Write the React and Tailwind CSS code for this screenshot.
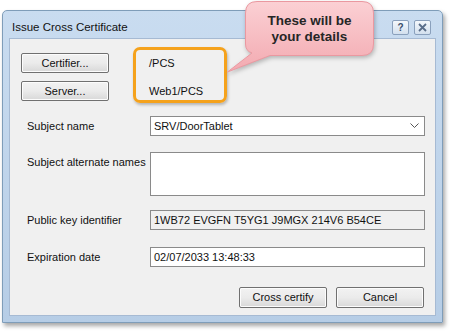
import React from "react";

function WinButton({ children, className = "" }) {
  return (
    <div
      className={
        "flex items-center justify-center border border-[#707070] rounded-[2px] bg-gradient-to-b from-[#f2f2f2] via-[#ebebeb] to-[#d8d8d8] shadow-[inset_0_0_0_1px_#fcfcfc] text-[11px] text-[#111] " +
        className
      }
    >
      {children}
    </div>
  );
}

function Field({ children, className = "", gray = false }) {
  return (
    <div
      className={
        "flex items-center border border-[#8a8a8a] px-[3px] text-[11px] text-[#111] " +
        (gray ? "bg-[#f0f0f0] " : "bg-white ") +
        className
      }
    >
      {children}
    </div>
  );
}

export default function App() {
  return (
    <div
      className="relative w-[454px] h-[334px] bg-white overflow-hidden"
      style={{ fontFamily: '"Liberation Sans", Arial, sans-serif' }}
    >
      <div className="pt-[10px] pl-[2px]">
        {/* Window */}
        <div className="w-[441px] h-[313px] flex flex-col border border-[#7f9db9] rounded-t-[5px] bg-gradient-to-b from-[#c9dcf0] to-[#b6cde6] shadow-[2px_3px_4px_rgba(0,0,0,0.35)]">
          {/* Title bar */}
          <div className="h-[27px] flex items-start justify-between pl-[9px] pr-[11px]">
            <div className="pt-[9px] text-[11.5px] leading-[14px] text-[#111]">
              Issue Cross Certificate
            </div>
            <div className="flex gap-[5px] pt-[9px]">
              <div className="w-[17px] h-[15px] flex items-center justify-center border border-[#8aa0bc] rounded-[2px] bg-gradient-to-b from-[#f4f8fc] to-[#d3e0ee] text-[10px] font-bold text-[#3a4e6a] leading-none">
                ?
              </div>
              <div className="w-[17px] h-[15px] flex items-center justify-center border border-[#8aa0bc] rounded-[2px] bg-gradient-to-b from-[#f4f8fc] to-[#d3e0ee]">
                <svg width="9" height="9" viewBox="0 0 9 9">
                  <path d="M1 1 L8 8 M8 1 L1 8" stroke="#5a6e8a" strokeWidth="1.8" />
                </svg>
              </div>
            </div>
          </div>
          {/* Client area */}
          <div className="mx-[6px] mb-[6px] flex-1 bg-[#f0f0f0] border border-[#a6bad3] flex flex-col">
            <div className="pt-[14px] pl-[11px] flex flex-col gap-[8px]">
              <div className="flex items-center">
                <WinButton className="w-[88px] h-[20px]">Certifier...</WinButton>
                <div className="ml-[40px] text-[11px] text-[#111]">/PCS</div>
              </div>
              <div className="flex items-center">
                <WinButton className="w-[88px] h-[20px]">Server...</WinButton>
                <div className="ml-[40px] text-[11px] text-[#111]">Web1/PCS</div>
              </div>
            </div>

            <div className="mt-[15px] pl-[17px] pr-[10px] flex flex-col text-[11px] text-[#111]">
              <div className="flex items-center h-[20px]">
                <div className="w-[123px]">Subject name</div>
                <Field className="flex-1 h-[20px] justify-between">
                  <span>SRV/DoorTablet</span>
                  <svg width="9" height="6" viewBox="0 0 9 6" className="mr-[2px]">
                    <path d="M0.5 0.5 L4.5 4.5 L8.5 0.5" stroke="#555" strokeWidth="1" fill="none" />
                  </svg>
                </Field>
              </div>
              <div className="flex items-start mt-[16px]">
                <div className="w-[123px] pt-[2px]">Subject alternate names</div>
                <Field className="flex-1 h-[44px]" />
              </div>
              <div className="flex items-center mt-[14px]">
                <div className="w-[123px]">Public key identifier</div>
                <Field gray className="flex-1 h-[20px]">
                  1WB72 EVGFN T5YG1 J9MGX 214V6 B54CE
                </Field>
              </div>
              <div className="flex items-center mt-[17px]">
                <div className="w-[123px]">Expiration date</div>
                <Field className="flex-1 h-[20px]">02/07/2033 13:48:33</Field>
              </div>
            </div>

            <div className="mt-[20px] pr-[11px] flex justify-end gap-[9px]">
              <WinButton className="w-[88px] h-[21px]">Cross certify</WinButton>
              <WinButton className="w-[88px] h-[21px]">Cancel</WinButton>
            </div>
          </div>
        </div>
      </div>

      {/* Orange highlight box */}
      <div className="absolute left-[133px] top-[47px] w-[94px] h-[56px] border-[3px] border-[#f5a21c] rounded-[7px] shadow-[1px_2px_3px_rgba(0,0,0,0.25)]" />

      {/* Callout */}
      <svg
        className="absolute left-0 top-0 drop-shadow-[1px_2px_2px_rgba(0,0,0,0.25)]"
        width="454"
        height="80"
        viewBox="0 0 454 80"
      >
        <defs>
          <linearGradient id="pink" x1="0" y1="0" x2="0" y2="1">
            <stop offset="0" stopColor="#fbd0d4" />
            <stop offset="1" stopColor="#f3aab1" />
          </linearGradient>
        </defs>
        <path
          d="M257 1.5 H362 Q373.5 1.5 373.5 13 V44 Q373.5 55.5 362 55.5 H270 L227.5 72 L252 53 Q245.5 51 245.5 44 V13 Q245.5 1.5 257 1.5 Z"
          fill="url(#pink)"
          stroke="#ea98a0"
          strokeWidth="1"
        />
      </svg>
      <div className="absolute left-[245px] top-[13px] w-[129px] text-center text-[13.5px] leading-[16px] font-bold text-[#262626]">
        These will be
        <br />
        your details
      </div>
    </div>
  );
}
